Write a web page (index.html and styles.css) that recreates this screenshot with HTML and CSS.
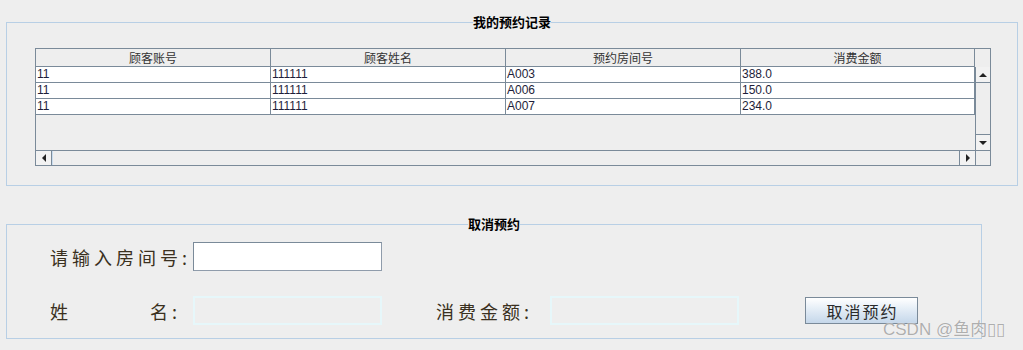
FILE: index.html
```html
<!DOCTYPE html>
<html lang="zh">
<head>
<meta charset="utf-8">
<title>我的预约记录</title>
<link rel="stylesheet" href="styles.css">
</head>
<body>
<section class="panel panel-top">
  <span class="panel-title">我的预约记录</span>
  <div class="scrollpane">
    <div class="viewport">
      <div class="grid">
        <div class="th">顾客账号</div>
        <div class="th">顾客姓名</div>
        <div class="th">预约房间号</div>
        <div class="th">消费金额</div>
        <div class="td">11</div><div class="td">111111</div><div class="td">A003</div><div class="td">388.0</div>
        <div class="td">11</div><div class="td">111111</div><div class="td">A006</div><div class="td">150.0</div>
        <div class="td">11</div><div class="td">111111</div><div class="td">A007</div><div class="td">234.0</div>
      </div>
    </div>
    <div class="vscroll">
      <div class="vcorner"></div>
      <div class="sbtn sbtn-up"><span class="arrow arrow-up"></span></div>
      <div class="vtrack"></div>
      <div class="sbtn sbtn-down"><span class="arrow arrow-down"></span></div>
    </div>
    <div class="hscroll">
      <div class="sbtn sbtn-left"><span class="arrow arrow-left"></span></div>
      <div class="htrack"></div>
      <div class="sbtn sbtn-right"><span class="arrow arrow-right"></span></div>
    </div>
    <div class="corner"></div>
  </div>
</section>

<section class="panel panel-bottom">
  <span class="panel-title">取消预约</span>
  <div class="form-row">
    <label class="lbl lbl-main">请输入房间号:</label>
    <div class="field field-input"></div>
  </div>
  <div class="form-row form-row-2">
    <label class="lbl lbl-main"><span class="spread">姓</span>名:</label>
    <div class="field field-off"></div>
    <label class="lbl lbl-amount">消费金额:</label>
    <div class="field field-off"></div>
    <button class="btn">取消预约</button>
  </div>
</section>

<div class="watermark">CSDN @鱼肉▯▯</div>
</body>
</html>
```

FILE: styles.css
```css
* { box-sizing: border-box; }

html, body {
  margin: 0;
  padding: 0;
  background: #eeeeee;
  width: 1023px;
  height: 350px;
  overflow: hidden;
}

body {
  position: relative;
  font-family: "Liberation Sans", "Noto Sans CJK SC", sans-serif;
  color: #222;
}

.panel {
  position: relative;
  margin-left: 6px;
  border: 1px solid #b8cfe5;
}

.panel-title {
  position: absolute;
  top: -8px;
  left: 50%;
  transform: translateX(-50%);
  background: #eeeeee;
  font-family: "Noto Sans CJK SC", sans-serif;
  font-weight: bold;
  font-size: 13px;
  line-height: 14px;
  color: #000;
  white-space: nowrap;
}

.panel-top {
  margin-top: 22px;
  width: 1012px;
  height: 164px;
  padding: 25px 0 0 28px;
}

.scrollpane {
  display: grid;
  grid-template-columns: 939px 15px;
  grid-template-rows: 101px 15px;
  width: 956px;
  height: 118px;
  border: 1px solid #7a8a99;
  background: #eeeeee;
}

.viewport {
  overflow: hidden;
}

.grid {
  display: grid;
  grid-template-columns: 235px 235px 235px 234px;
  grid-template-rows: 18px;
  grid-auto-rows: 16px;
}

.th {
  height: 18px;
  border-right: 1px solid #7a8a99;
  border-bottom: 1px solid #7a8a99;
  font-family: "Noto Sans CJK SC", sans-serif;
  font-size: 12px;
  line-height: 17px;
  text-align: center;
  color: #333;
  background: #eeeeee;
}

.td {
  height: 16px;
  border-right: 1px solid #7a8a99;
  border-bottom: 1px solid #7a8a99;
  background: #fff;
  font-size: 12px;
  line-height: 15px;
  padding-left: 1px;
  color: #1e1e3a;
}

.vscroll {
  display: flex;
  flex-direction: column;
}

.vcorner {
  height: 18px;
  flex: none;
}

.sbtn {
  display: flex;
  align-items: center;
  justify-content: center;
  background: #f2f2f2;
  flex: none;
}

.sbtn-up {
  height: 16px;
  border-left: 1px solid #7a8a99;
  border-bottom: 1px solid #7a8a99;
}

.sbtn-down {
  height: 16px;
  border-left: 1px solid #7a8a99;
  border-top: 1px solid #7a8a99;
}

.vtrack {
  flex: 1;
  border-left: 1px solid #7a8a99;
  background: #eeeeee;
}

.hscroll {
  display: flex;
  border-top: 1px solid #7a8a99;
}

.sbtn-left {
  width: 16px;
  border-right: 1px solid #7a8a99;
}

.sbtn-right {
  width: 16px;
  border-left: 1px solid #7a8a99;
}

.htrack {
  flex: 1;
  border-left: 1px solid #c9dcee;
  background: #eeeeee;
}

.corner {
  border-left: 1px solid #7a8a99;
  border-top: 1px solid #7a8a99;
}

.arrow {
  width: 0;
  height: 0;
  display: block;
}

.arrow-up {
  border-left: 4px solid transparent;
  border-right: 4px solid transparent;
  border-bottom: 4px solid #222;
}

.arrow-down {
  border-left: 4px solid transparent;
  border-right: 4px solid transparent;
  border-top: 4px solid #222;
}

.arrow-left {
  border-top: 4px solid transparent;
  border-bottom: 4px solid transparent;
  border-right: 4px solid #222;
}

.arrow-right {
  border-top: 4px solid transparent;
  border-bottom: 4px solid transparent;
  border-left: 4px solid #222;
}

.panel-bottom {
  margin-top: 38px;
  width: 976px;
  height: 115px;
  padding: 17px 0 0 43px;
}

.form-row {
  display: flex;
  align-items: center;
  height: 29px;
}

.form-row-2 {
  margin-top: 25px;
}

.lbl {
  font-family: "Noto Sans CJK SC", serif;
  font-size: 18px;
  letter-spacing: 4px;
  color: #3a3020;
  white-space: nowrap;
  line-height: 20px;
}

.lbl-main {
  width: 143px;
  flex: none;
}

.spread {
  display: inline-block;
  width: 100px;
}

.lbl-amount {
  margin-left: 54px;
  width: 114px;
  flex: none;
}

.field {
  width: 189px;
  height: 29px;
  flex: none;
}

.field-input {
  background: #fff;
  border: 1px solid #7a8a99;
  border-right-color: #8f9cab;
  border-bottom-color: #8f9cab;
}

.field-off {
  background: #eeeeee;
  border: 2px solid #e6f7fa;
}

.btn {
  margin-left: 66px;
  width: 113px;
  height: 27px;
  flex: none;
  padding: 0 0 0 2px;
  border: 1px solid #7a8a99;
  background: linear-gradient(#ffffff, #e4edf6 45%, #c5d7ea);
  font-family: "Noto Sans CJK SC", serif;
  font-size: 16px;
  letter-spacing: 2px;
  color: #2a2a2a;
  line-height: 20px;
}

.watermark {
  position: absolute;
  left: 883px;
  top: 320px;
  font-family: "Liberation Sans", "Noto Sans CJK SC", sans-serif;
  font-size: 17px;
  line-height: 20px;
  color: rgba(160, 160, 160, 0.85);
  text-shadow: 0 0 1px #fff;
  white-space: nowrap;
}
```
